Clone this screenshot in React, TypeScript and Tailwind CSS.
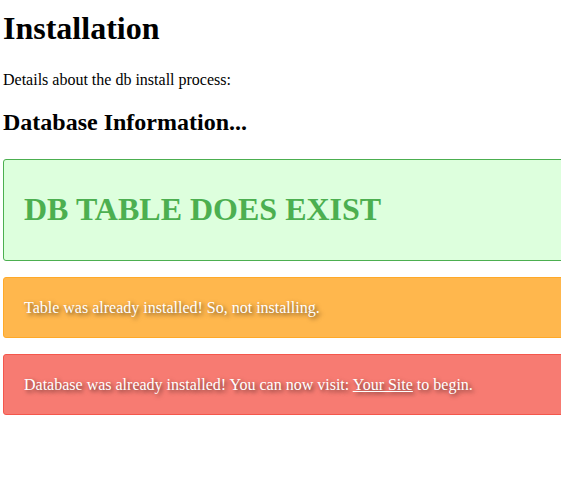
export default function App() {
  return (
    <div className="w-full h-[490px] overflow-hidden bg-white text-black" style={{ fontFamily: '"Liberation Serif", "Times New Roman", serif' }}>
      <div className="pl-[3px]">
        <h1 className="text-[32px] font-bold leading-[normal] pt-[10px]">Installation</h1>
        <p className="text-[16px] leading-[normal] mt-[24px]">Details about the db install process:</p>
        <h2 className="text-[24px] font-bold leading-[normal] mt-[19.5px]">Database Information...</h2>
        <div className="w-[620px] mt-[23px] rounded-[3px] border border-[#4caf50] bg-[#ddffdd] px-[20px] pt-[10px] pb-[11px]">
          <h1 className="text-[32px] font-bold leading-[normal] text-[#4caf50] my-[21.44px]">DB TABLE DOES EXIST</h1>
        </div>
        <div className="w-[620px] mt-[16px] rounded-[3px] border border-[#ffa928] bg-[#ffb74d] px-[20px] py-[20px] text-white text-[16px] leading-[19px] [text-shadow:2px_2px_4px_rgba(0,0,0,0.6)]">
          Table was already installed! So, not installing.
        </div>
        <div className="w-[620px] mt-[16px] rounded-[3px] border border-[#f4574c] bg-[#f77b72] px-[20px] py-[20px] text-white text-[16px] leading-[19px] [text-shadow:2px_2px_4px_rgba(0,0,0,0.6)]">
          Database was already installed! You can now visit: <a href="#" className="underline text-white">Your Site</a> to begin.
        </div>
      </div>
    </div>
  );
}
